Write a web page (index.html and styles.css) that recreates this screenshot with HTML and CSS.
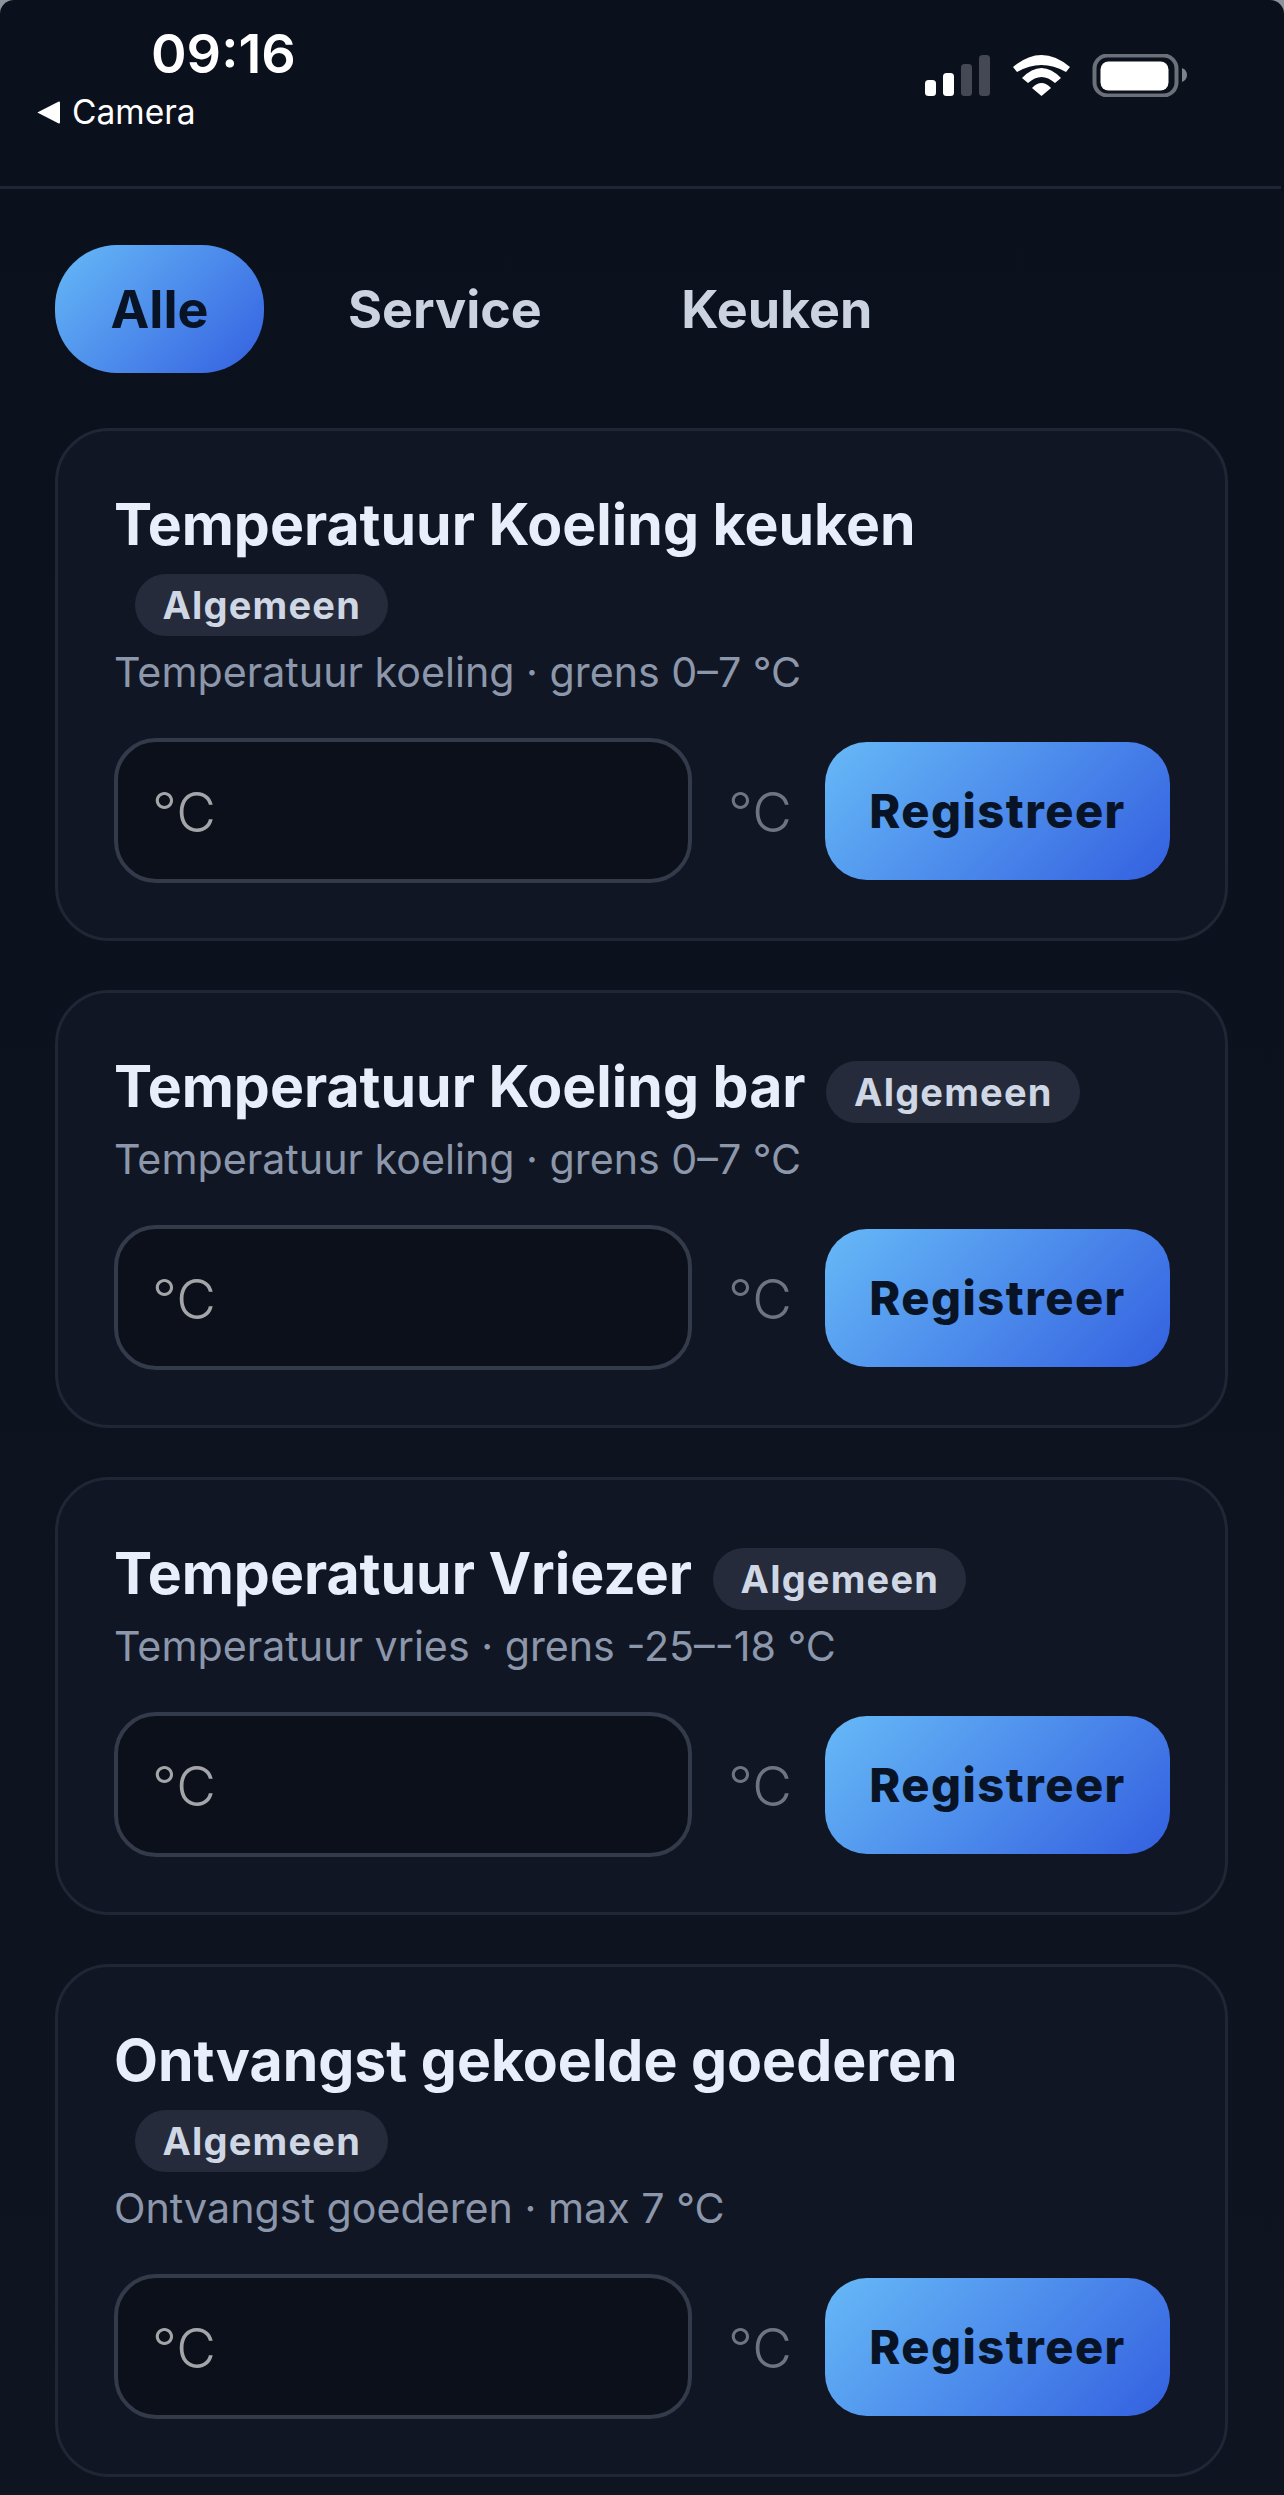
FILE: index.html
```html
<!DOCTYPE html>
<html lang="nl">
<head>
<meta charset="utf-8">
<title>Registraties</title>
<link rel="stylesheet" href="styles.css">
</head>
<body>
<div class="app">
  <header class="status">
    <div class="status-left">
      <div class="time">09:16</div>
      <div class="back">
        <svg class="back-icon" viewBox="0 0 20 20" aria-hidden="true"><path d="M0.3 10 L18.500 0.600 Q20 0 20 1.600 L20 18.400 Q20 20 18.500 19.400 Z"/></svg>
        <span>Camera</span>
      </div>
    </div>
    <svg class="status-icons" viewBox="0 0 262 43" aria-hidden="true">
      <rect class="on" x="0" y="26" width="11" height="16" rx="3.5"/>
      <rect class="on" x="18" y="19" width="11" height="23" rx="3.5"/>
      <rect class="off" x="36" y="10" width="11" height="32" rx="3.5"/>
      <rect class="off" x="54" y="1" width="11" height="41" rx="3.5"/>
      <g class="on" transform="translate(88 1)">
        <path d="M0 12Q28.500 -12 57 12L53 17Q28.500 3 4 17Z"/>
        <path d="M9 23Q28.500 3 48 23L42 28Q28.500 16 15 28Z"/>
        <path d="M19 33Q28.500 23 38 33L28.500 41Z"/>
      </g>
      <rect class="batt" x="169.500" y="1.500" width="82" height="40" rx="13"/>
      <rect class="on" x="175.500" y="7.500" width="68" height="29" rx="8"/>
      <path class="nub" d="M257 14L257 28Q262 26 262 21Q262 16 257 14Z"/>
    </svg>
  </header>

  <main class="content">
    <nav class="tabs">
      <button class="tab active" type="button">Alle</button>
      <button class="tab" type="button">Service</button>
      <button class="tab" type="button">Keuken</button>
    </nav>

    <section class="card">
      <div class="heading"><h2 class="title">Temperatuur Koeling keuken</h2><span class="tag">Algemeen</span></div>
      <p class="sub">Temperatuur koeling · grens 0–7 °C</p>
      <form class="entry">
        <input class="field" type="text" placeholder="°C">
        <span class="unit">°C</span>
        <button class="submit" type="button">Registreer</button>
      </form>
    </section>

    <section class="card">
      <div class="heading"><h2 class="title">Temperatuur Koeling bar</h2><span class="tag">Algemeen</span></div>
      <p class="sub">Temperatuur koeling · grens 0–7 °C</p>
      <form class="entry">
        <input class="field" type="text" placeholder="°C">
        <span class="unit">°C</span>
        <button class="submit" type="button">Registreer</button>
      </form>
    </section>

    <section class="card">
      <div class="heading"><h2 class="title">Temperatuur Vriezer</h2><span class="tag">Algemeen</span></div>
      <p class="sub">Temperatuur vries · grens -25–-18 °C</p>
      <form class="entry">
        <input class="field" type="text" placeholder="°C">
        <span class="unit">°C</span>
        <button class="submit" type="button">Registreer</button>
      </form>
    </section>

    <section class="card">
      <div class="heading"><h2 class="title">Ontvangst gekoelde goederen</h2><span class="tag">Algemeen</span></div>
      <p class="sub">Ontvangst goederen · max 7 °C</p>
      <form class="entry">
        <input class="field" type="text" placeholder="°C">
        <span class="unit">°C</span>
        <button class="submit" type="button">Registreer</button>
      </form>
    </section>
  </main>
</div>
</body>
</html>
```
FILE: styles.css
```css
* { box-sizing: border-box; }

html, body {
  margin: 0;
  height: 100%;
  background: #8d929b;
}

body {
  font-family: Inter, "Liberation Sans", sans-serif;
  overflow: hidden;
}

.app {
  height: 2495px;
  background: linear-gradient(180deg, #0b111c 0%, #0e1420 100%);
  border-radius: 14px 14px 0 0;
  overflow: hidden;
}

.status {
  height: 189px;
  margin-right: 3px;
  padding: 26px 94px 0 37px;
  display: flex;
  justify-content: space-between;
  align-items: flex-start;
  border-bottom: 3px solid #1f2636;
}

.status-left {
  display: flex;
  flex-direction: column;
}

.time {
  margin-left: 114px;
  font-size: 54px;
  line-height: 56px;
  font-weight: 600;
  color: #fff;
}

.back {
  display: flex;
  align-items: center;
  gap: 12px;
  margin-top: 10px;
  font-size: 33.5px;
  line-height: 40px;
  font-weight: 400;
  color: #fff;
}

.back-icon {
  width: 23px;
  height: 23px;
  fill: #fff;
}

.status-icons {
  width: 262px;
  height: 43px;
  margin-top: 28px;
}

.status-icons .on { fill: #fff; }
.status-icons .off { fill: #434854; }
.status-icons .batt { fill: none; stroke: #6b7079; stroke-width: 4; }
.status-icons .nub { fill: #7d828c; }

.content {
  padding: 56px 56px 0 55px;
}

.tabs {
  display: flex;
  gap: 28.5px;
  margin-bottom: 55px;
}

.tab {
  height: 128px;
  padding: 0 55.5px;
  border: 0;
  border-radius: 62px;
  background: transparent;
  font-family: inherit;
  font-size: 52px;
  font-weight: 700;
  color: #cbd3e1;
}

.tab.active,
.submit {
  background: linear-gradient(135deg, #66b9f7 0%, #3460e0 100%);
  color: #081425;
}

.card {
  margin-bottom: 49px;
  padding: 56px 55px 55px 56px;
  background: #101624;
  border: 3px solid #1f2635;
  border-radius: 54px;
}

.heading {
  font-size: 57px;
  line-height: 75px;
}

.title {
  display: inline;
  margin: 0;
  font-size: 57.15px;
  font-weight: 700;
  color: #e8effb;
}

.tag {
  display: inline-block;
  margin-left: 20.5px;
  padding: 0 27px 0 28px;
  height: 62px;
  line-height: 62px;
  vertical-align: 1px;
  border-radius: 31px;
  background: #252b3a;
  font-size: 38px;
  letter-spacing: 1.2px;
  font-weight: 700;
  color: #cfd6e4;
}

.sub {
  margin: 10px 0 41px;
  font-size: 41.2px;
  line-height: 50px;
  font-weight: 400;
  color: #8d97ab;
}

.entry {
  display: flex;
  align-items: center;
}

.field {
  flex: none;
  width: 578px;
  height: 145px;
  padding: 2px 34px 0;
  background: #0b101a;
  border: 4px solid #333a4a;
  border-radius: 42px;
  font-family: inherit;
  font-size: 54.5px;
  font-weight: 350;
  color: #e8effb;
  outline: none;
}

.field::placeholder {
  color: #a3a5a9;
  opacity: 1;
}

.unit {
  margin-left: 36px;
  padding-top: 3px;
  font-size: 54.5px;
  font-weight: 350;
  color: #6d7482;
}

.submit {
  flex: none;
  width: 345px;
  height: 138px;
  margin-left: auto;
  border: 0;
  border-radius: 42px;
  font-family: inherit;
  font-size: 47px;
  letter-spacing: 1.5px;
  font-weight: 800;
}
```
